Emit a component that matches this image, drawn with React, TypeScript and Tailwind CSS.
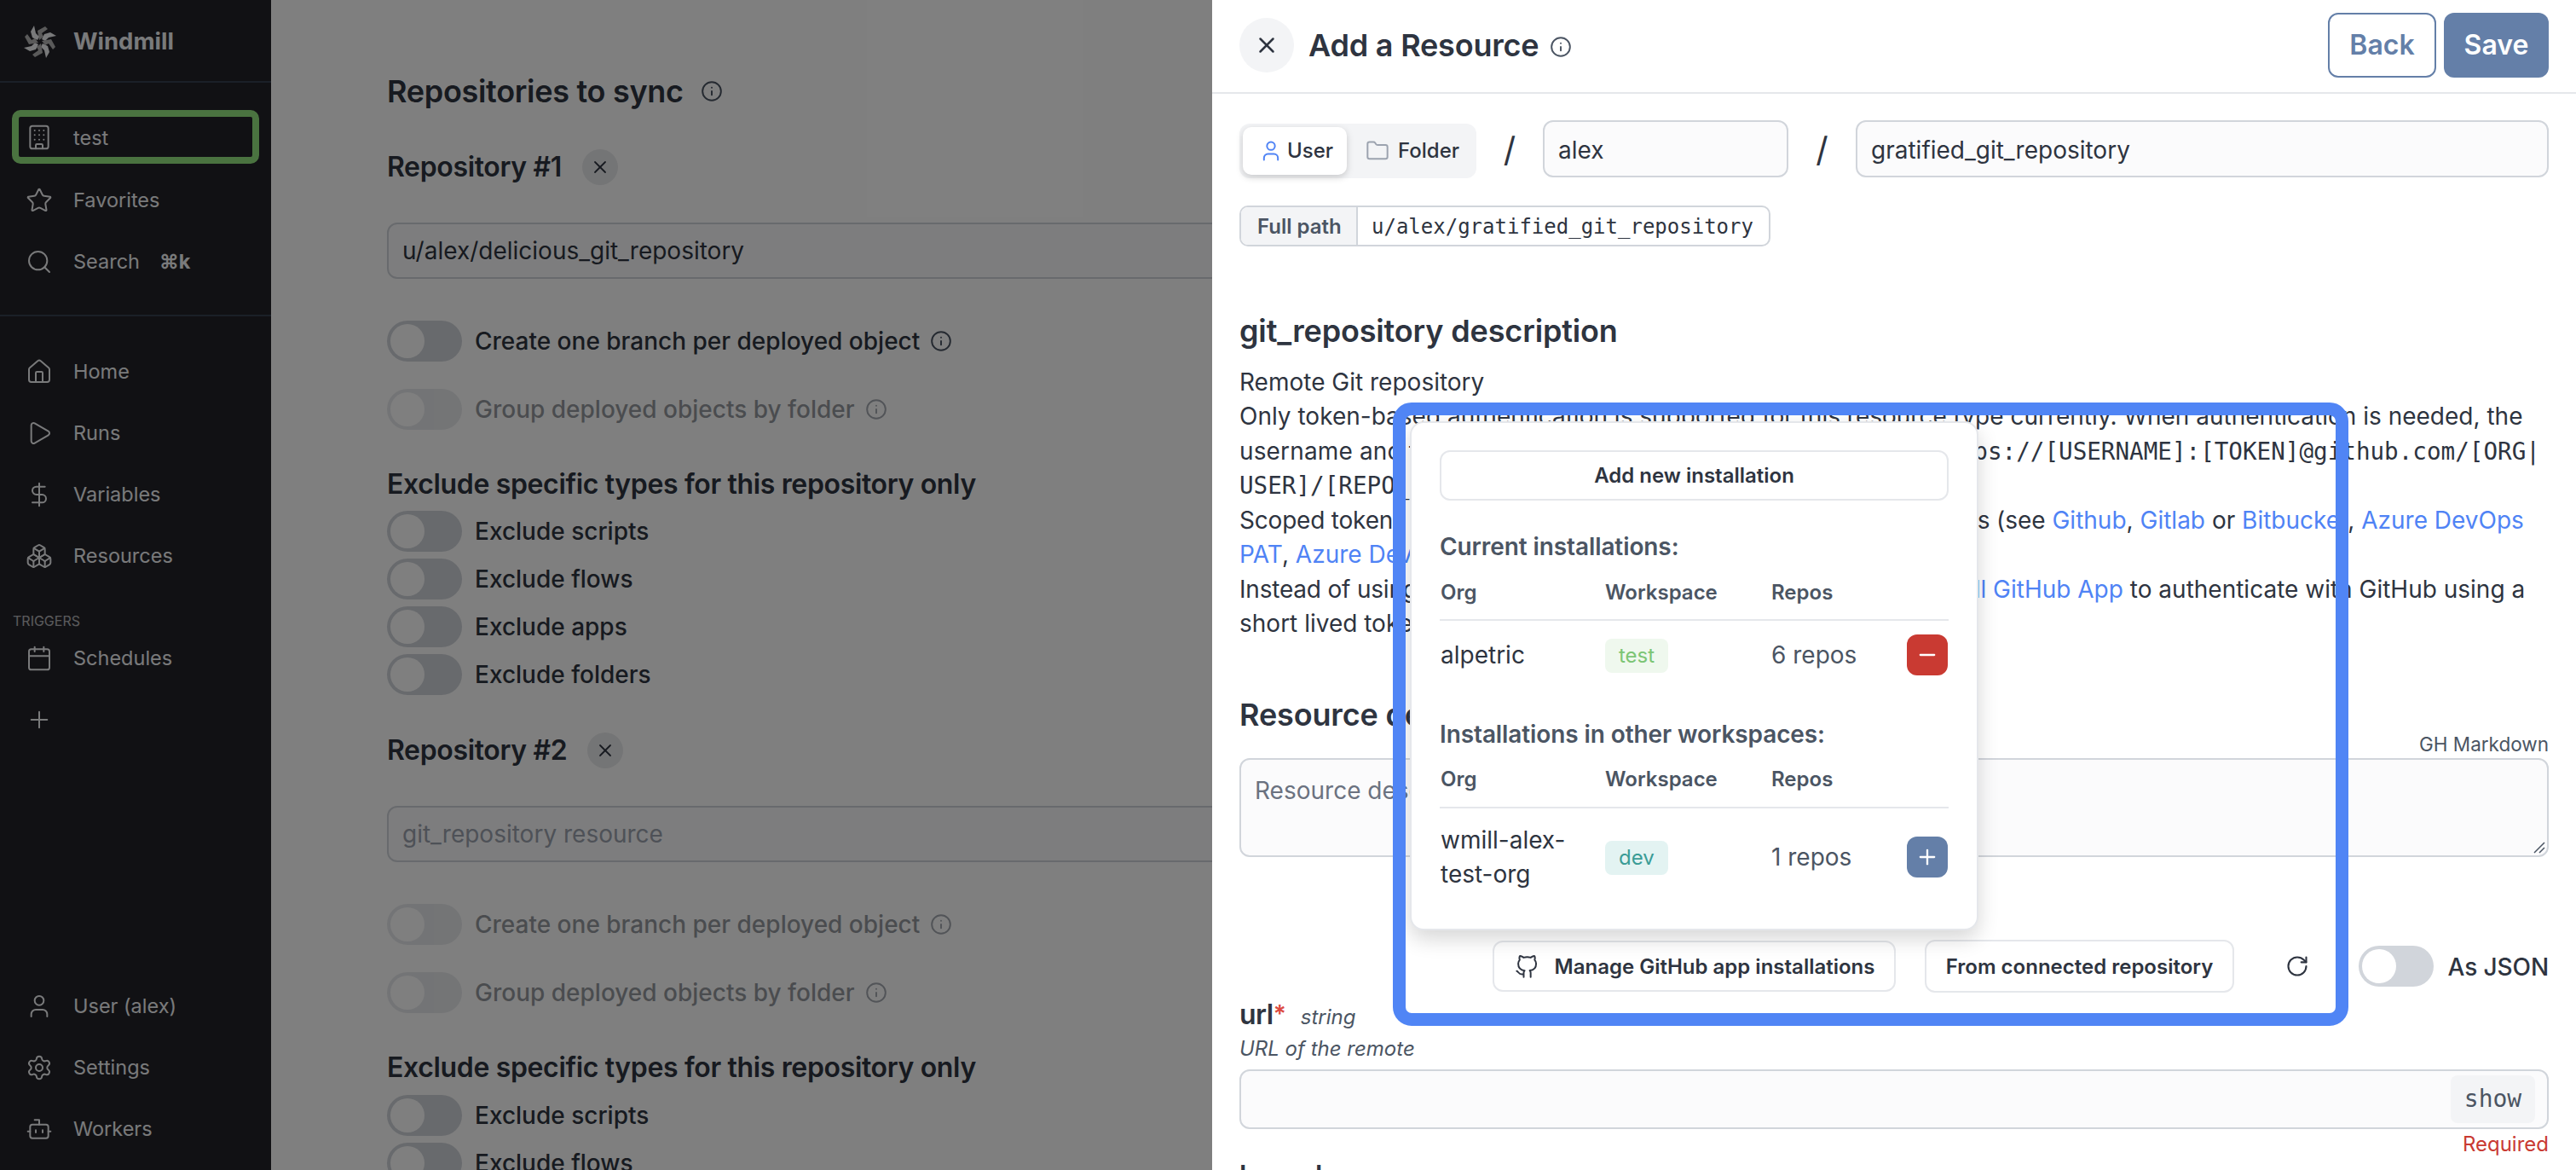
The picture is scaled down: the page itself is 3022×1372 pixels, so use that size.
import React from "react";
import { Building, Star, Search, Home, Play, DollarSign, Boxes, Calendar, Plus, User, Settings, Bot, Info, X, Folder, RotateCw, Minus } from "lucide-react";
import { FiGithub } from "react-icons/fi";

const mono = "[font-family:'DejaVu_Sans_Mono',monospace]";

function NavRow({ icon: I, label, extra, h = "h-[72px]" }: { icon: any; label?: string; extra?: string; h?: string }) {
  return (
    <div className={`flex items-center pl-[30px] ${h}`}>
      <I size={32} strokeWidth={1.5} className="text-[#f3f4f6] shrink-0" />
      {label && <span className="ml-[24px] text-[23.5px] leading-8 text-[#f3f4f6]">{label}</span>}
      {extra && <span className="ml-[23px] text-[23.5px] leading-8 font-bold text-[#f3f4f6]">{extra}</span>}
    </div>
  );
}

function Logo() {
  const blade = (r: number) => (
    <g key={r} transform={`rotate(${r} 20 18)`}>
      <polygon points="19,16 17,5 26,0 29,3 22,8 24,12" fill="#b4b4b4" />
      <polygon points="22,15 25,9 32,7 39,11 30,13 26,17" fill="#f3f4f6" />
    </g>
  );
  return (
    <svg width="40" height="36" viewBox="0 0 40 36" className="shrink-0 overflow-visible">
      {[0, 90, 180, 270].map(blade)}
    </svg>
  );
}

function Sidebar() {
  return (
    <div className="w-[318px] shrink-0 h-full bg-[#222228] flex flex-col">
      <div className="h-[97px] shrink-0 border-b-2 border-[#374151] flex items-center pl-[27px] pt-[3px]">
        <Logo />
        <span className="ml-[19px] text-[27.5px] font-bold text-[#f3f4f6]">Windmill</span>
      </div>
      <div className="mt-[32px] mx-[14px] h-[63px] rounded-[10px] border-[8px] border-[#94e680] flex items-center pl-[8px]">
        <Building size={32} strokeWidth={1.5} className="text-[#f3f4f6]" />
        <span className="ml-[24px] text-[23.5px] pt-[2px] text-[#f3f4f6]">test</span>
      </div>
      <div className="mt-[7px]">
        <NavRow icon={Star} label="Favorites" />
        <NavRow icon={Search} label="Search" extra="⌘k" />
      </div>
      <div className="mt-[26px] border-t-2 border-[#374151] pt-[29px]">
        <NavRow icon={Home} label="Home" />
        <NavRow icon={Play} label="Runs" />
        <NavRow icon={DollarSign} label="Variables" />
        <NavRow icon={Boxes} label="Resources" />
      </div>
      <div className="mt-[30px] pl-[15px] text-[16px] leading-5 text-[#f3f4f6] opacity-70">TRIGGERS</div>
      <div className="-mt-[2px]">
        <NavRow icon={Calendar} label="Schedules" />
        <NavRow icon={Plus} />
      </div>
      <div className="mt-auto pb-[12px]">
        <NavRow icon={User} label="User (alex)" />
        <NavRow icon={Settings} label="Settings" />
        <NavRow icon={Bot} label="Workers" />
      </div>
    </div>
  );
}

function Toggle({ dim, className = "" }: { dim?: boolean; className?: string }) {
  return (
    <div className={`w-[88px] h-[48px] rounded-full bg-[#d1d5db] p-[4px] shrink-0 ${dim ? "opacity-50" : ""} ${className}`}>
      <div className="w-[40px] h-[40px] rounded-full bg-white" />
    </div>
  );
}

function ToggleRow({ label, info, dim, className = "" }: { label: string; info?: boolean; dim?: boolean; className?: string }) {
  return (
    <div className={`flex items-center ${className}`}>
      <Toggle dim={dim} />
      <span className={`ml-[15px] text-[28px] leading-10 font-medium text-[#2e3440] ${dim ? "opacity-50" : ""}`}>{label}</span>
      {info && <Info size={26} strokeWidth={1.8} className={`ml-[12px] text-[#4b5563] ${dim ? "opacity-50" : ""}`} />}
    </div>
  );
}

function Excludes({ n }: { n: string[] }) {
  return (
    <div className="flex flex-col gap-[8px]">
      {n.map((x) => (
        <ToggleRow key={x} label={x} />
      ))}
    </div>
  );
}

function RepoHead({ label }: { label: string }) {
  return (
    <div className="flex items-center h-[40px]">
      <span className="text-[32px] font-semibold tracking-[-0.35px] text-[#2e3440] leading-10">{label}</span>
      <span className="ml-[24px] w-[42px] h-[42px] rounded-full bg-[#e9eaec] flex items-center justify-center">
        <X size={24} strokeWidth={1.8} className="text-[#2e3440]" />
      </span>
    </div>
  );
}

function MainPage() {
  return (
    <div className="flex-1 bg-white pl-[136px] pt-[85px] overflow-hidden">
      <div className="w-[1300px]">
        <div className="flex items-center h-[44px]">
          <span className="text-[36px] font-semibold tracking-[-0.3px] text-[#2e3440]">Repositories to sync</span>
          <Info size={26} strokeWidth={1.8} className="ml-[20px] text-[#4b5563]" />
        </div>
        <div className="mt-[47px]"><RepoHead label="Repository #1" /></div>
        <div className="mt-[45px] h-[66px] rounded-[12px] border-2 border-[#d1d5db] bg-[#fbfbfc] flex items-center pl-[16px] text-[28px] text-[#2e3440]">u/alex/delicious_git_repository</div>
        <ToggleRow className="mt-[49px]" label="Create one branch per deployed object" info />
        <ToggleRow className="mt-[32px]" label="Group deployed objects by folder" info dim />
        <div className="mt-[42px] h-[44px] flex items-center text-[32px] font-semibold tracking-[-0.35px] text-[#2e3440]">Exclude specific types for this repository only</div>
        <div className="mt-[9px]"><Excludes n={["Exclude scripts", "Exclude flows", "Exclude apps", "Exclude folders"]} /></div>
        <div className="mt-[45px]"><RepoHead label="Repository #2" /></div>
        <div className="mt-[45px] h-[66px] rounded-[12px] border-2 border-[#d1d5db] bg-[#fbfbfc] flex items-center pl-[16px] text-[28px] text-[#9ca3af]">git_repository resource</div>
        <ToggleRow className="mt-[49px]" label="Create one branch per deployed object" info dim />
        <ToggleRow className="mt-[32px]" label="Group deployed objects by folder" info dim />
        <div className="mt-[42px] h-[44px] flex items-center text-[32px] font-semibold tracking-[-0.35px] text-[#2e3440]">Exclude specific types for this repository only</div>
        <div className="mt-[10px]"><Excludes n={["Exclude scripts", "Exclude flows"]} /></div>
      </div>
    </div>
  );
}

const A = ({ children }: { children: React.ReactNode }) => <span className="text-[#4f83f5]">{children}</span>;

function Description() {
  return (
    <div className="mt-[20px] text-[28px] leading-[40.3px] text-[#2e3440] whitespace-nowrap">
      <div>Remote Git repository</div>
      <div>Only token-based authentication is supported for this resource type currently. When authentication is needed, the</div>
      <div><span className="tracking-[0.14px]">username and token should be embedded directly in the url: </span><span className={`${mono} text-[27.6px]`}>https://[USERNAME]:[TOKEN]@github.com/[ORG|</span></div>
      <div className={`${mono} text-[27.6px]`}>USER]/[REPO_NAME].git</div>
      <div><span className="tracking-[-0.2px]">Scoped tokens are recommended for authenticating git repositories </span>(see <A>Github</A>, <A>Gitlab</A> or <A>Bitbucket</A>, <A>Azure DevOps</A></div>
      <div><A>PAT</A>, <A>Azure DevOps Service Principal</A></div>
      <div><span className="tracking-[-0.2px]">Instead of using a personal access token, you can use the </span><A>Windmill GitHub App</A> to authenticate with GitHub using a</div>
      <div>short lived token.</div>
    </div>
  );
}

const colHead = "flex items-center text-[24px] leading-8 font-semibold text-[#4b5563]";

function InstallHead({ className = "" }: { className?: string }) {
  return (
    <div className={`${colHead} border-b-2 border-[#e5e7eb] ${className}`}>
      <span className="w-[194px] pl-[1px]">Org</span>
      <span className="w-[195px]">Workspace</span>
      <span>Repos</span>
    </div>
  );
}

function InstallRow({ org, ws, badge, repos, action, className = "" }: { org: string; ws: string; badge: string; repos: string; action: React.ReactNode; className?: string }) {
  return (
    <div className={`flex items-center text-[28px] leading-10 ${className}`}>
      <span className="w-[194px] pl-[1px] pr-[40px] text-[#2e3440]">{org}</span>
      <span className="w-[195px]">
        <span className={`inline-flex items-center h-[40px] px-[16px] rounded-[8px] text-[24px] ${badge}`}>{ws}</span>
      </span>
      <span className="w-[159px] text-[#4b5563]">{repos}</span>
      {action}
    </div>
  );
}

function Popup() {
  return (
    <div className="absolute left-[232px] top-[494px] w-[667px] h-[597px] bg-white border-2 border-[#e5e7eb] rounded-[16px] shadow-[0_10px_24px_rgba(0,0,0,0.16)] pt-[32px] pl-[33px] pr-[33px]">
      <div className="h-[59px] rounded-[12px] border-2 border-[#e5e7eb] flex items-center justify-center pt-[1px] text-[24px] font-semibold text-[#2e3440]">Add new installation</div>
      <div className="mt-[34px] text-[28px] leading-10 font-semibold tracking-[-0.1px] text-[#4b5563]">Current installations:</div>
      <InstallHead className="mt-[18px] pb-[15px]" />
      <InstallRow
        className="pt-[16px]"
        org="alpetric"
        ws="test"
        badge="bg-[#eff8ee] text-[#7cc575]"
        repos="6 repos"
        action={<span className="w-[48px] h-[48px] rounded-[12px] bg-[#c93a32] flex items-center justify-center"><Minus size={28} strokeWidth={2} className="text-white" /></span>}
      />
      <div className="mt-[49px] text-[28px] leading-10 font-semibold tracking-[-0.1px] text-[#4b5563]">Installations in other workspaces:</div>
      <InstallHead className="mt-[17px] pb-[16px]" />
      <InstallRow
        className="pt-[17px]"
        org="wmill-alex-test-org"
        ws="dev"
        badge="bg-[#e3f3f2] text-[#3a9c96]"
        repos="1 repos"
        action={<span className="w-[48px] h-[48px] rounded-[12px] bg-[#647fa8] flex items-center justify-center"><Plus size={28} strokeWidth={2} className="text-white" /></span>}
      />
    </div>
  );
}

function Drawer() {
  return (
    <div className="absolute right-0 top-0 bottom-0 w-[1600px] bg-white overflow-hidden">
      <div className="h-[110px] border-b-2 border-[#e5e7eb] flex items-center pl-[32px] pr-[32px] pb-[2px]">
        <span className="w-[64px] h-[64px] rounded-full bg-[#f3f4f6] flex items-center justify-center">
          <X size={30} strokeWidth={2} className="text-[#2e3440]" />
        </span>
        <span className="ml-[17px] text-[36px] font-semibold tracking-[-0.2px] text-[#2e3440]">Add a Resource</span>
        <Info size={26} strokeWidth={1.8} className="ml-[13px] mt-[4px] text-[#4b5563]" />
        <span className="ml-auto w-[127px] h-[76px] rounded-[12px] border-2 border-[#647fa8] flex items-center justify-center text-[32px] font-semibold text-[#647fa8]">Back</span>
        <span className="ml-[9px] w-[123px] h-[76px] rounded-[12px] bg-[#647fa8] flex items-center justify-center text-[32px] font-semibold text-white">Save</span>
      </div>
      <div className="px-[32px]">
        <div className="mt-[31px] flex items-center h-[67px]">
          <div className="w-[278px] h-[64px] rounded-[12px] bg-[#f3f4f6] p-[4px] flex items-center mt-[5px]">
            <div className="w-[122px] h-[56px] rounded-[10px] bg-white shadow-[0_3px_8px_rgba(0,0,0,0.18)] flex items-center pl-[19px]">
              <User size={28} strokeWidth={1.7} className="text-[#4f83f5]" />
              <span className="ml-[5px] text-[24px] font-medium text-[#2e3440]">User</span>
            </div>
            <Folder size={28} strokeWidth={1.7} className="ml-[22px] text-[#9ca3af]" />
            <span className="ml-[10px] text-[24px] font-medium text-[#2e3440]">Folder</span>
          </div>
          <span className="w-[78px] text-center pt-[2px] text-[40px] text-[#2e3440]">/</span>
          <div className="w-[288px] h-[67px] rounded-[12px] border-2 border-[#d1d5db] bg-[#fbfbfc] flex items-center pl-[16px] pt-[2px] text-[28px] text-[#2e3440]">alex</div>
          <span className="w-[79px] text-center pt-[2px] text-[40px] text-[#2e3440]">/</span>
          <div className="flex-1 h-[67px] rounded-[12px] border-2 border-[#d1d5db] bg-[#fbfbfc] flex items-center pl-[16px] pt-[2px] text-[28px] text-[#2e3440]">gratified_git_repository</div>
        </div>
        <div className="mt-[33px] inline-flex h-[48px] rounded-[10px] border-2 border-[#d1d5db] overflow-hidden align-top">
          <span className="w-[137px] bg-[#f3f4f6] border-r-2 border-[#d1d5db] flex items-center pl-[19px] pt-[2px] text-[24px] font-semibold text-[#4b5563]">Full path</span>
          <span className={`pl-[16px] pr-[18px] pt-[2px] flex items-center text-[24px] text-[#2e3440] ${mono}`}>u/alex/gratified_git_repository</span>
        </div>
        <div className="mt-[79px] text-[36px] leading-10 font-semibold tracking-[-0.15px] text-[#2e3440]">git_repository description</div>
        <Description />
        <div className="mt-[66px] pt-[1px] -mb-[1px] text-[36px] leading-10 font-semibold tracking-[-0.15px] text-[#2e3440]">Resource description</div>
        <div className="h-[32px] text-right text-[22.5px] leading-8 text-[#4b5563]">GH Markdown</div>
        <div className="relative h-[116px] rounded-[12px] border-2 border-[#d1d5db] bg-[#fbfbfc] pl-[16px] pt-[16px] text-[28px] leading-10 text-[#6b7280]">
          Resource description
          <svg width="16" height="16" viewBox="0 0 16 16" className="absolute right-[2px] bottom-[2px]">
            <path d="M15 3 L3 15 M15 9 L9 15" stroke="#4b5563" strokeWidth="1.5" />
          </svg>
        </div>
        <div className="mt-[97px] h-[62px] flex items-center justify-end">
          <span className="h-[60px] w-[473px] rounded-[12px] border-2 border-[#e5e7eb] flex items-center pl-[24px] pt-[1px] text-[24px] font-semibold text-[#2e3440]">
            <FiGithub size={28} strokeWidth={1.7} />
            <span className="ml-[19px]">Manage GitHub app installations</span>
          </span>
          <span className="ml-[34px] h-[62px] w-[363px] rounded-[12px] border-2 border-[#e5e7eb] flex items-center justify-center pt-[1px] pl-[1px] text-[24px] font-semibold text-[#2e3440]">From connected repository</span>
          <RotateCw size={28} strokeWidth={1.8} className="ml-[60px] text-[#2e3440]" />
          <Toggle className="ml-[58px]" />
          <span className="ml-[17px] pt-[1px] text-[28px] font-medium tracking-[-0.1px] text-[#2e3440]">As JSON</span>
        </div>
        <div className="mt-[6px] h-[40px] flex items-center">
          <span className="text-[32px] font-semibold tracking-[-0.5px] text-[#2e3440]">url</span>
          <span className="text-[28px] -mt-[2px] font-semibold text-[#dc4a41]">*</span>
          <span className="ml-[17px] mt-[6px] text-[24px] italic text-[#4b5563]">string</span>
        </div>
        <div className="mt-[4px] text-[24px] leading-8 italic text-[#4b5563]">URL of the remote</div>
        <div className="mt-[8px] h-[70px] rounded-[12px] border-2 border-[#d1d5db] bg-[#fbfbfc] flex items-center justify-end pr-[14px]">
          <span className={`w-[99px] h-[56px] rounded-[8px] bg-[#f3f4f6] flex items-center justify-center text-[28px] text-[#4b5563] ${mono}`}>show</span>
        </div>
        <div className="mt-[2px] text-right text-[24px] leading-8 text-[#c93a32]">Required</div>
        <div className="mt-[1px] text-[32px] leading-10 font-semibold text-[#2e3440]">branch</div>
      </div>
      <Popup />
      <div className="absolute left-[212px] top-[472px] w-[1121px] h-[731px] rounded-[22px] border-[15px] border-[#5085f5] pointer-events-none" />
    </div>
  );
}

export default function App() {
  return (
    <div className="relative w-[3022px] h-[1372px] overflow-hidden flex [font-family:Inter,sans-serif]">
      <Sidebar />
      <MainPage />
      <div className="absolute inset-0 bg-black/50" />
      <Drawer />
    </div>
  );
}
